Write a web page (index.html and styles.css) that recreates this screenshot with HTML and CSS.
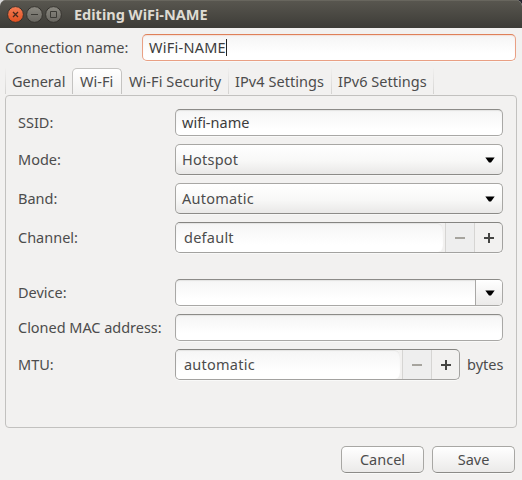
FILE: index.html
```
<!DOCTYPE html>
<html lang="en">
<head>
<meta charset="utf-8">
<title>Editing WiFi-NAME</title>
<link rel="stylesheet" href="styles.css">
</head>
<body>
<div class="window">
  <header class="titlebar">
    <svg class="controls" width="54" height="18" viewBox="0 0 54 18">
      <defs>
        <linearGradient id="red" x1="0" y1="0" x2="0" y2="1"><stop offset="0" stop-color="#f47d55"/><stop offset="1" stop-color="#e04f1f"/></linearGradient>
        <linearGradient id="gray" x1="0" y1="0" x2="0" y2="1"><stop offset="0" stop-color="#8b8981"/><stop offset="1" stop-color="#686660"/></linearGradient>
      </defs>
      <circle cx="8.5" cy="9.5" r="7.9" fill="url(#red)" stroke="#35332e"/>
      <circle cx="27.5" cy="9.5" r="7.9" fill="url(#gray)" stroke="#35332e"/>
      <circle cx="46.500" cy="9.5" r="7.9" fill="url(#gray)" stroke="#35332e"/>
      <path d="M6 7l5 5M11 7l-5 5" stroke="#46291d" stroke-width="1.3" fill="none"/>
      <path d="M24 9.500h7M43.500 6.500h6v6h-6z" stroke="#3b3a35" fill="none"/>
    </svg>
    <h1>Editing WiFi-NAME</h1>
  </header>
  <div class="name-row">
    <label class="t-conn">Connection name:</label>
    <div class="entry focused"><span class="t-wifi">WiFi-NAME</span><i class="caret"></i></div>
  </div>
  <nav class="tabs">
    <div class="tab general"><span>General</span></div>
    <div class="tab active"><span>Wi-Fi</span></div>
    <div class="tab security"><span>Wi-Fi Security</span></div>
    <div class="tab ip4"><span>IPv4 Settings</span></div>
    <div class="tab ip6"><span>IPv6 Settings</span></div>
  </nav>
  <main class="panel">
    <div class="row"><label>SSID:</label><div class="entry"><span>wifi-name</span></div></div>
    <div class="row tall"><label>Mode:</label><div class="combo"><span class="t-hotspot">Hotspot</span><svg class="arrow" width="10" height="6"><path d="M.3.5h9.400L6 5.500H4z"/></svg></div></div>
    <div class="row tall"><label>Band:</label><div class="combo"><span class="t-auto">Automatic</span><svg class="arrow" width="10" height="6"><path d="M.3.5h9.400L6 5.500H4z"/></svg></div></div>
    <div class="row tall channel"><label>Channel:</label>
      <div class="spin"><div class="value"><span class="t-default">default</span></div>
        <div class="step off"><svg width="10" height="10"><path d="M0 4h10v2H0z"/></svg></div>
        <div class="step"><svg width="10" height="10"><path d="M0 4h4V0h2v4h4v2H6v4H4V6H0z"/></svg></div></div></div>
    <div class="row"><label>Device:</label><div class="entry split"><div class="drop"><svg class="arrow" width="10" height="6"><path d="M.3.5h9.400L6 5.500H4z"/></svg></div></div></div>
    <div class="row"><label class="t-mac">Cloned MAC address:</label><div class="entry"></div></div>
    <div class="row tall"><label>MTU:</label>
      <div class="spin"><div class="value"><span class="t-auto">automatic</span></div>
        <div class="step off"><svg width="10" height="10"><path d="M0 4h10v2H0z"/></svg></div>
        <div class="step"><svg width="10" height="10"><path d="M0 4h4V0h2v4h4v2H6v4H4V6H0z"/></svg></div></div>
      <span class="unit">bytes</span></div>
  </main>
  <footer class="actions"><button>Cancel</button><button>Save</button></footer>
</div>
</body>
</html>
```
FILE: styles.css
```
* { box-sizing: border-box; }
body { margin: 0; width: 522px; height: 480px; overflow: hidden; background: linear-gradient(90deg, #d9d9d9 50%, #24242e 50%); font: 14.5px/20px "Noto Sans", "Open Sans", sans-serif; color: #4c4c4c; }
.window { height: 480px; background: #f2f1f0; border-radius: 6px 6px 0 0; overflow: hidden; }
svg { display: block; overflow: visible; }
span, label { white-space: nowrap; padding-bottom: 2px; }
.titlebar { height: 28px; display: flex; align-items: center; padding: 1px 7px; background: linear-gradient(#595750, #3d3c37); box-shadow: inset 0 1px #68665e; }
h1 { margin: 0 0 0 13px; font-size: 14.5px; line-height: 20px; font-weight: 700; color: #dfdbd2; white-space: nowrap; }
.name-row { display: flex; align-items: center; padding: 6px 6px 0 5px; }
.name-row label { width: 137px; }
.name-row .entry { flex: 1; }
.t-conn { letter-spacing: -0.06px; }
.t-wifi { letter-spacing: 0.25px; }
.t-mac { letter-spacing: -0.03px; }
.t-hotspot, .t-auto, .t-default { letter-spacing: 0.24px; }
.entry { height: 27px; display: flex; align-items: center; padding: 0 6px; border: 1px solid #a9a8a6; border-top-color: #8c8b88; border-radius: 5px; background: linear-gradient(#f5f5f5, #fff 75%); box-shadow: inset 0 1px 1px #e4e4e3, 0 1px #f9f9f8; color: #3c3c3c; }
.entry.focused { border-color: #e9a084; border-top-color: #df8059; box-shadow: inset 0 1px 1px #f3e1da, 0 1px #f9f9f8; }
.caret { width: 1px; height: 17px; background: #222; }
.tabs { height: 27px; margin: 7px 5px 0; display: flex; }
.tab { height: 26px; padding: 3px 0 0 7px; border-right: 1px solid; border-image: linear-gradient(#f2f1f0, #d3d2d0) 1; }
.general { width: 67px; border-left: 1px solid; border-right: 0; padding-left: 6px; }
.tab.active { width: 50px; height: 26px; border: 1px solid #c4c3c1; border-bottom: 0; border-image: none; border-radius: 5px 5px 0 0; background: linear-gradient(#fff, #f2f1f0); padding: 2px 0 0 7px; }
.security { width: 107px; letter-spacing: 0.07px; }
.ip4 { width: 103px; padding-left: 6px; letter-spacing: 0.06px; }
.ip6 { width: 102px; padding-left: 6px; letter-spacing: 0.03px; }
.panel { height: 333px; margin: 0 5px; padding: 13px 13px 0 12px; display: flex; flex-direction: column; gap: 8px; border: 1px solid #c2c1bf; border-radius: 4px; }
.row { height: 27px; display: flex; align-items: center; }
.row.tall { height: 31px; }
.channel { margin-bottom: 18px; }
.row label { width: 157px; flex: none; }
.row .entry, .combo, .spin { flex: 1; }
.combo { height: 31px; display: flex; align-items: center; justify-content: space-between; padding: 0 7px 0 6px; border: 1px solid #a8a7a4; border-bottom-color: #8c8b88; border-radius: 5px; background: linear-gradient(#fff, #f8f8f7 55%, #e9e8e7); box-shadow: inset 0 1px #fff, 0 1px #f7f7f6; }
.spin { height: 31px; display: flex; border: 1px solid #a3a2a0; border-top-color: #858481; border-radius: 5px; overflow: hidden; box-shadow: 0 1px #f9f9f8; }
.value { flex: 1; display: flex; align-items: center; padding-left: 8px; background: linear-gradient(#f5f5f5, #fff 75%); border-right: 2px solid #f2f1f0; border-radius: 4px 7px 7px 4px; box-shadow: inset 0 1px 1px #e4e4e3; }
.step { width: 29px; border-left: 1px solid #d6d5d3; display: grid; place-items: center; fill: #454543; }
.step:last-child { width: 28px; }
.step.off { background: #eee; fill: #a6a49e; }
.split { padding: 0; justify-content: flex-end; }
.drop { width: 27px; height: 25px; display: flex; align-items: center; justify-content: flex-end; padding-right: 7px; border-left: 1px solid #a9a8a6; border-radius: 0 4px 4px 0; background: linear-gradient(#fff, #ebeae9); }
.arrow { fill: #000; }
.unit { width: 36px; margin-left: 7px; }
.actions { display: flex; justify-content: flex-end; gap: 8px; padding: 18px 7px 0; }
button { width: 83px; height: 27px; padding: 0 0 2px; font: inherit; color: inherit; border: 1px solid #a8a7a4; border-bottom-color: #8c8b88; border-radius: 5px; background: linear-gradient(#fff, #ebeae9); box-shadow: 0 1px #f9f9f8; }
```
